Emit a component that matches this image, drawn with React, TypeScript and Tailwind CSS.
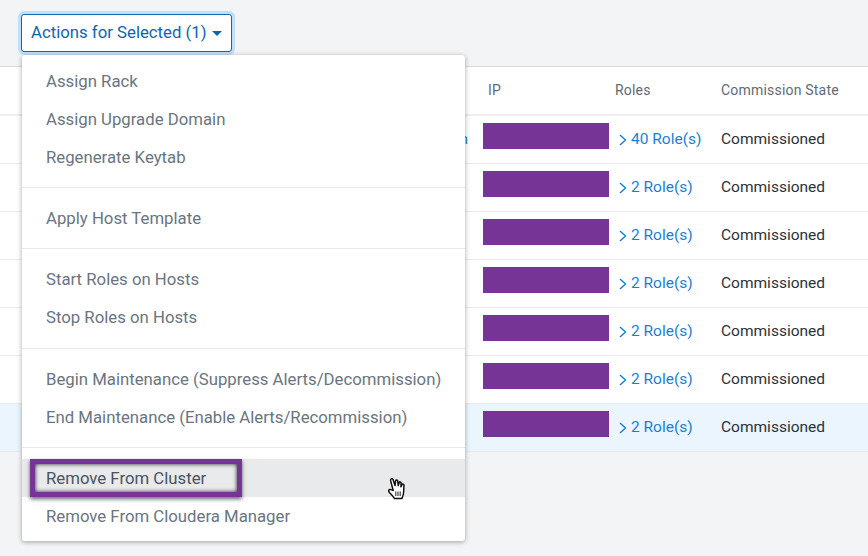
import React from "react";

const ff = { fontFamily: "Roboto, sans-serif" };

const groups = [
  ["Assign Rack", "Assign Upgrade Domain", "Regenerate Keytab"],
  ["Apply Host Template"],
  ["Start Roles on Hosts", "Stop Roles on Hosts"],
  ["Begin Maintenance (Suppress Alerts/Decommission)", "End Maintenance (Enable Alerts/Recommission)"],
];

const rows = ["40", "2", "2", "2", "2", "2", "2"];

function Chevron() {
  return (
    <svg width="8" height="12" viewBox="0 0 8 12" fill="none" stroke="#1a7fd4" strokeWidth="1.4" className="shrink-0">
      <path d="M1 1l5.5 5L1 11" />
    </svg>
  );
}

function Hand() {
  return (
    <svg width="20" height="24" viewBox="0 0 20 24" className="absolute left-[387px] top-[477px]">
      <path
        d="M6.2 13.5 L3.6 3.6 C3.2 1.6 5.4 1 6 2.6 L8 8.6 L8.6 3.9 C9 2.6 10.6 2.8 10.8 4.1 L11.2 8.8 L12.2 5.6 C12.7 4.4 14.2 4.8 14.1 6.1 L13.9 9.8 L15 7.6 C15.6 6.7 17.1 7.1 17 8.4 L16.6 15.5 C16.4 18.5 15.5 20 14.8 21.6 L7.6 21.6 C6.6 19.8 4.2 17.4 2.4 15.4 C1.2 14.1 1.6 12.3 3.2 12.5 C4.3 12.7 5.2 13 6.2 13.5 Z"
        fill="#fff"
        stroke="#111"
        strokeWidth="1.5"
        strokeLinejoin="round"
      />
      <path d="M8.8 14.5v4.5M11 14.5v4.5M13.2 14.5v4.5" stroke="#333" strokeWidth="1.1" />
    </svg>
  );
}

export default function App() {
  return (
    <div className="relative w-[868px] h-[556px] overflow-hidden bg-[#f3f4f6]" style={ff}>
      <div className="h-[66px] pl-[21px] pt-[14px]">
        <button className="h-[38px] w-[211px] flex items-center pl-[9px] gap-[5px] rounded-[3px] border border-[#1a65a8] bg-white text-[16.75px] text-[#0f65ad] shadow-[0_0_0_3px_#bfe0fb]">
          Actions for Selected (1)
          <span className="w-0 h-0 border-x-[5px] border-x-transparent border-t-[5px] border-t-[#0f65ad]" />
        </button>
      </div>

      <div className="border-t border-[#d8dbe0] bg-white">
        <div className="flex h-[49px] items-center border-b-2 border-[#eceef0] text-[14px] tracking-[0.2px] text-[#5f6b74]">
          <div className="w-[488px]" />
          <div className="w-[127px]">IP</div>
          <div className="w-[106px]">Roles</div>
          <div>Commission State</div>
        </div>
        {rows.map((r, i) => (
          <div
            key={i}
            className={`flex h-[48px] items-center border-b border-[#e8eaec] text-[15.5px] ${i === 6 ? "bg-[#eaf5fd]" : "bg-white"}`}
          >
            <div className="w-[483px] pr-[15px] text-right text-[#1a7fd4]">{i === 0 ? "n" : ""}</div>
            <div className="mb-[7px] h-[26px] w-[126px] bg-[#763596]" />
            <div className="flex w-[112px] items-center gap-[4px] pl-[10px] pt-[1px] text-[#1a7fd4]">
              <Chevron />
              <span>{r} Role(s)</span>
            </div>
            <div className="pt-[1px] text-[#2c3238]">Commissioned</div>
          </div>
        ))}
      </div>

      <div className="absolute left-[22px] top-[55px] w-[443px] rounded-[3px] bg-white pt-[7px] pb-[6px] text-[16.75px] text-[#6a7580] whitespace-nowrap shadow-[0_1px_5px_rgba(0,0,0,0.35)]">
        {groups.map((g, i) => (
          <div key={i} className="border-b border-[#e8e9eb] py-[11px] first:pt-0 nth-[3]:pb-[12px]">
            {g.map((t) => (
              <div key={t} className="flex h-[38px] items-center px-[24px] pt-[2px]">{t}</div>
            ))}
          </div>
        ))}
        <div className="pt-[11px]">
          <div className="flex h-[38px] items-center bg-[#e9eaec] px-[24px] pt-[1px] text-[#4a535c]">Remove From Cluster</div>
          <div className="flex h-[38px] items-center px-[24px] pt-[2px]">Remove From Cloudera Manager</div>
        </div>
      </div>

      <div className="absolute left-[30px] top-[459px] h-[38px] w-[212px] border-[5px] border-[#763596] shadow-[0_2px_4px_rgba(0,0,0,0.6),inset_0_0_4px_rgba(0,0,0,0.85)]" />
      <Hand />
    </div>
  );
}
